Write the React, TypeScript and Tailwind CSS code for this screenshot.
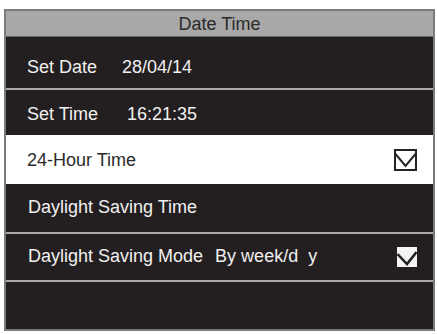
import React from "react";

function OutlineCheck() {
  return (
    <svg width="23" height="22" viewBox="0 0 23 22" className="block">
      <rect x="1" y="1" width="21" height="20" fill="none" stroke="#262324" strokeWidth="2" />
      <polyline points="1.5,5 11.5,17 21.5,5" fill="none" stroke="#262324" strokeWidth="2" />
    </svg>
  );
}

function FilledCheck() {
  return (
    <svg width="20" height="20" viewBox="0 0 20 20" className="block">
      <rect x="0" y="0" width="20" height="20" fill="#f4f4f4" />
      <polyline points="0.5,7 10,17 19.5,5" fill="none" stroke="#231f20" strokeWidth="2.5" />
    </svg>
  );
}

const Divider = () => <div className="h-[2px] bg-[#a9a9a9]" />;

export default function App() {
  return (
    <div className="min-h-[334px] bg-white pt-[9px] pl-[4px] font-['Liberation_Sans',Arial,sans-serif]">
      <div className="flex h-[322px] w-[431px] flex-col border-2 border-[#7b7b7b] bg-[#231f20] text-[18px] leading-none text-[#f0f0f0]">
        <div className="flex h-[26px] shrink-0 items-center justify-center border-b border-[#6a6a6a] bg-[#a8a8a8] text-[#2a2a2a]">
          Date Time
        </div>

        <div className="flex h-[51px] shrink-0 items-center pl-[21px] pt-[8px]">
          <span>Set Date</span>
          <span className="ml-[25px]">28/04/14</span>
        </div>
        <Divider />

        <div className="flex h-[45px] shrink-0 items-center pl-[21px] pt-[2px]">
          <span>Set Time</span>
          <span className="ml-[29px]">16:21:35</span>
        </div>

        <div className="flex h-[49px] shrink-0 items-center justify-between bg-white pl-[21px] pr-[16px] text-[#2b2b2b]">
          <span>24-Hour Time</span>
          <OutlineCheck />
        </div>

        <div className="flex h-[48px] shrink-0 items-center pl-[22px] pb-[2px]">
          <span>Daylight Saving Time</span>
        </div>
        <Divider />

        <div className="flex h-[46px] shrink-0 items-center justify-between pl-[22px] pr-[16px]">
          <div className="flex items-center pb-[3px]">
            <span>Daylight Saving Mode</span>
            <span className="ml-[12px]">By week/d</span>
            <span className="ml-[10px]">y</span>
          </div>
          <FilledCheck />
        </div>
        <Divider />

        <div className="flex-1" />
      </div>
    </div>
  );
}
